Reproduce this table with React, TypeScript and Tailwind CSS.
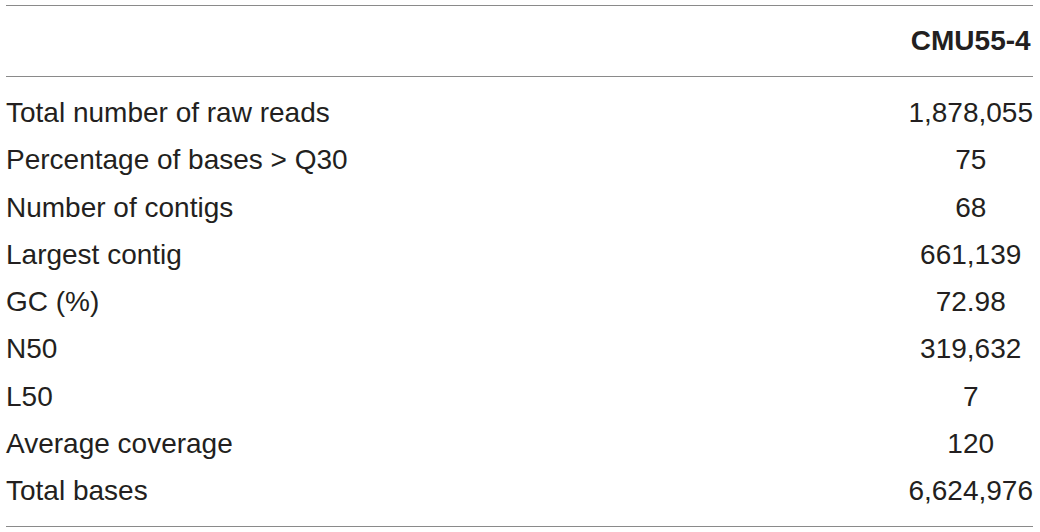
const rows: [string, string][] = [
  ["Total number of raw reads", "1,878,055"],
  ["Percentage of bases > Q30", "75"],
  ["Number of contigs", "68"],
  ["Largest contig", "661,139"],
  ["GC (%)", "72.98"],
  ["N50", "319,632"],
  ["L50", "7"],
  ["Average coverage", "120"],
  ["Total bases", "6,624,976"],
];

export default function App() {
  return (
    <div className="w-[1040px] h-[532px] bg-white pt-[5px] pl-[6px] pr-[7px] text-[#231f20] font-['Liberation_Sans',Arial,sans-serif]">
      <table className="w-full border-collapse text-[28px]">
        <thead>
          <tr className="border-y-[1.5px] border-[#8a8a8a]">
            <th className="w-full h-[71px] p-0" />
            <th className="h-[71px] p-0 text-center font-bold whitespace-nowrap">CMU55-4</th>
          </tr>
        </thead>
        <tbody className="border-b-[1.5px] border-[#8a8a8a]">
          {rows.map(([label, value], i) => (
            <tr key={label}>
              <td
                className={`p-0 leading-[47.25px] text-left ${i === 0 ? "pt-[12px]" : ""} ${i === rows.length - 1 ? "pb-[12px]" : ""}`}
              >
                {label}
              </td>
              <td
                className={`p-0 leading-[47.25px] text-center whitespace-nowrap ${i === 0 ? "pt-[12px]" : ""} ${i === rows.length - 1 ? "pb-[12px]" : ""}`}
              >
                {value}
              </td>
            </tr>
          ))}
        </tbody>
      </table>
    </div>
  );
}
